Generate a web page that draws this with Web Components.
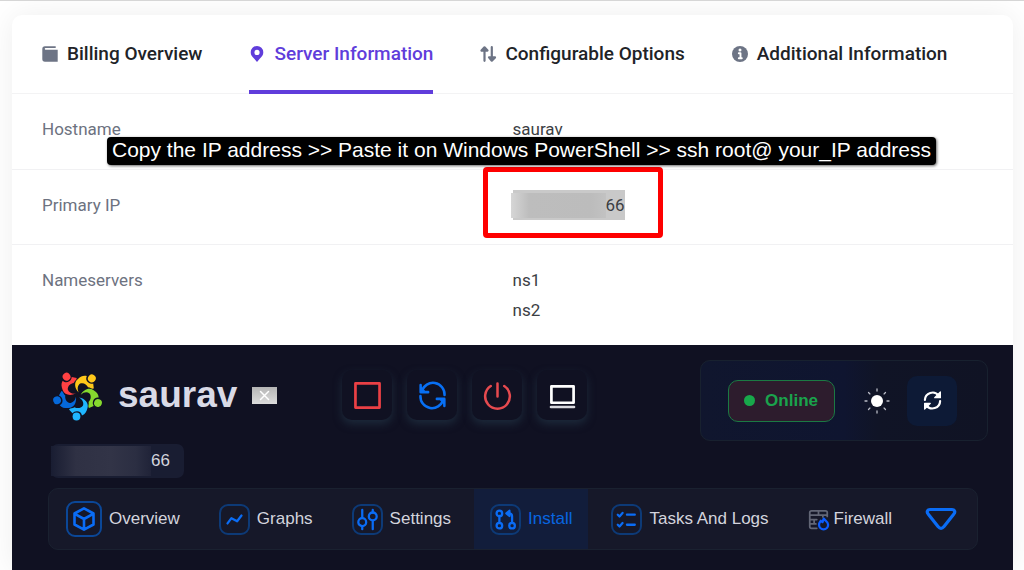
<!DOCTYPE html>
<html lang="en">
<head>
<meta charset="utf-8">
<title>Server Information</title>
<style>
  body { margin: 0; background: #fff; font-family: Roboto, "Liberation Sans", sans-serif; }
</style>
</head>
<body>
<server-page></server-page>
<script>
const define = (name, html) => customElements.define(name, class extends HTMLElement {
  constructor() {
    super();
    this.attachShadow({ mode: "open" });
  }
  connectedCallback() {
    if (this.shadowRoot.childNodes.length) return;
    const t = document.createElement("template");
    t.innerHTML = typeof html === "function" ? html(this) : html;
    this.shadowRoot.append(t.content.cloneNode(true));
  }
});

/* Icons: [viewBox, markup] */
const figure = (angle, fill) => `<g transform="rotate(${angle})" fill="${fill}"><circle cx="-1.500" cy="21.500" r="3.900"/><path d="M1 2.500C7 3.500 11 8 9.500 13C8.500 16.500 7.500 19 4 20.500C3.500 17.500 1.500 16.300-1 16.200C-3 16.200-4.500 17-5.500 18.300L-9 14.500C-7.500 12.500-5.500 13.700-3.500 12.200C-1 13.600 3 13.500 5 10.500C6 7.500 4.500 4.500 1 2.500Z"/></g>`;
const rays = [0, 45, 90, 135, 180, 225, 270, 315].map(a => `<path d="M0-12V-10" transform="rotate(${a})"/>`).join("");
const line = (art, width = 2.6) => `<g stroke="currentColor" stroke-width="${width}">${art}</g>`;
const ICONS = {
  wallet: ["0 0 16 16", `<path fill="currentColor" d="M3 .3h10.700V2H3.500c-1 0-1 1.700 0 1.700H15.700V15.700H3A2.700 2.700 0 0 1 .3 13V3A2.700 2.700 0 0 1 3 .3Z"/>`],
  pin: ["0 0 16 16", `<path fill="currentColor" fill-rule="evenodd" d="M8 0a6.300 6.300 0 0 1 6.300 6.300c0 2.800-1.300 4.300-3.800 6.700L8 16l-2.500-3C3 10.600 1.700 9.100 1.700 6.300A6.300 6.300 0 0 1 8 0Zm0 3.800a2.600 2.600 0 1 0 0 5.200 2.600 2.600 0 0 0 0-5.200Z"/>`],
  swap: ["0 0 16 16", `<g fill="currentColor" stroke="currentColor" stroke-width="2.200"><path d="M4.500 14.800V3M1.500 4.600h6L4.500 1.300Z"/><path d="M11.800 1.200V13M9 11.400h6L11.800 14.700Z"/></g>`],
  info: ["0 0 16 16", `<circle cx="8" cy="8" r="8" fill="currentColor"/><circle cx="8" cy="4" r="1.500" fill="#fff"/><path d="M6.800 7.200h1.700v4.800M6.800 12.200h3" stroke="#fff" stroke-width="1.900"/>`],
  logo: ["-25 -25 50 50", figure(0, "#1fb6ff") + figure(72, "#0568d9") + figure(144, "#ff4143") + figure(216, "#ffc81a") + figure(288, "#86d92e")],
  stop: ["0 0 28 28", `<path d="M1.500 1.500h25v25h-25Z" stroke="#ea4045" stroke-width="2.800"/>`],
  restart: ["0 0 28 28", `<g stroke="#0870f5" stroke-width="2.600"><path d="M3 9.500A12 12 0 0 1 26.500 13.500M1.700 3v7.500H9.500"/><path d="M25 18.500A12 12 0 0 1 1.500 14.500M26.300 25v-7.500H18.500"/><path fill="#0870f5" d="M2 5l4.500 5H2ZM26 23l-4.500-5H26Z" stroke-width="1"/></g>`],
  power: ["0 0 28 28", `<path d="M14 1.500V15M7 4.200a12.800 12.800 0 1 0 14 0" stroke="#e64a4f" stroke-width="2.600"/>`],
  console: ["0 0 28 28", `<path d="M2.500 4.500h23v17h-23Z" stroke="#fff" stroke-width="2.800"/><path d="M2 26h24" stroke="#d9d9df" stroke-width="2.600"/>`],
  sun: ["-13 -13 26 26", `<circle r="6" fill="#fff"/><g stroke="#b9bbc6" stroke-width="1.300">${rays}</g>`],
  sync: ["0 0 20 20", `<g stroke="#fff" stroke-width="2.300"><path d="M2 9.500A8 8 0 0 1 16.500 5"/><path d="M18 10.500A8 8 0 0 1 3.500 15"/><path fill="#fff" stroke-width="1.300" d="M18.300 1v6h-6ZM1.700 19v-6h6Z"/></g>`],
  cube: ["0 0 24 24", line(`<path d="M12 1.300 21.500 6.500v11L12 22.700 2.500 17.500v-11ZM2.800 6.800 12 12l9.200-5.200M12 12v10.500"/>`)],
  graph: ["0 0 24 24", line(`<path d="M4 16.500 8.500 10.500l6.500 3.500L20 7.500"/>`)],
  sliders: ["0 0 24 24", line(`<path d="M6 1v8M6 20v3M18 1v3M18 13.500V23"/><circle cx="6" cy="15" r="4.500"/><circle cx="18" cy="8.500" r="4.500"/>`)],
  branch: ["0 0 24 24", line(`<path d="M5 8v8M19.500 16V8a3 3 0 0 0-3-3h-3M16.500 2 13 5l3.500 3Z"/><circle cx="5" cy="5" r="3.200"/><circle cx="5" cy="19" r="3.200"/><circle cx="19.500" cy="19" r="3.200"/>`)],
  tasks: ["0 0 24 24", line(`<path d="M2 6.500 4 8.500 7.500 4.500M12.500 6.500h9M2 18l2 2 3.500-4M12.500 18h9"/>`)],
  firewall: ["0 0 24 24", `<path stroke="#626676" stroke-width="2" d="M10 22H4a2 2 0 0 1-2-2V4A2 2 0 0 1 4 2h16a2 2 0 0 1 2 2V8.500M2 7h20M2 12h8M2 17h7M12 2v5M17 7v2M7 12v5"/><path stroke="#0b5cff" stroke-width="2.600" d="M18 11c1 2 5 3 5 7a5.200 5.200 0 0 1-10.400 0c0-2 1-3 2-4.500l2 1.500Z"/>`],
  drop: ["0 0 32 24", line(`<path d="M5 2.500h22c3 0 3.500 3 1.700 4.700L19 19.500c-2 2.500-4 2.500-6 0L3.300 7.200C1.500 5.500 2 2.500 5 2.500Z"/>`, 3.2)],
  missing: ["0 0 25 17", `<defs><linearGradient id="g" x2="0" y2="1"><stop stop-color="#b5b5b5"/><stop offset="1" stop-color="#dcdcdc"/></linearGradient></defs><path fill="url(#g)" d="M0 0h25v17H0Z"/><path d="m8.500 4.500 8 8M16.500 4.500l-8 8" stroke="#fff" stroke-width="1.500"/>`]
};
define("ui-icon", el => {
  const [box, art] = ICONS[el.getAttribute("name")];
  return `<style>:host{display:block;flex:none}svg{display:block;width:100%;height:100%;overflow:visible}</style>
  <svg viewBox="${box}" aria-hidden="true" fill="none" stroke-linejoin="round" stroke-linecap="round">${art}</svg>`;
});

define("info-tab", el => `<style>
  :host { display: block; }
  a { position: relative; display: flex; align-items: center; gap: 9px; height: 79px; padding-bottom: 2px; box-sizing: border-box;
      color: #212327; text-decoration: none; font-size: 19px; font-weight: 500; line-height: 24px; white-space: nowrap; }
  ui-icon { width: 16px; height: 16px; color: #6d7485; }
  :host([active]) a, :host([active]) ui-icon { color: #603ddb; }
  :host([active]) a::after { content: ""; position: absolute; left: 0; right: 0; bottom: 0; height: 4px; background: #603ddb; }
</style><a href="#"><ui-icon name="${el.getAttribute("icon")}"></ui-icon><span><slot></slot></span></a>`);

define("info-tabs", `<style>
  :host { display: block; border-bottom: 1px solid #f3f3f4; }
  nav { display: flex; gap: 47px; padding: 0 30px; margin-bottom: -1px; }
</style><nav><slot></slot></nav>`);

define("info-row", `<style>
  :host { display: block; position: relative; border-bottom: 1px solid #f1f1f3; }
  :host(:last-of-type) { border-bottom: 0; }
  dl { display: grid; grid-template-columns: 1fr 1fr; margin: 0; padding: 20px 0 24px; font-size: 17px; line-height: 30px; }
  dt { padding-left: 30px; color: #6d7280; }
  dd { margin: 0; color: #3c3e43; }
  :host(:first-of-type) dl { padding-bottom: 25px; }
  :host(:last-of-type) dl { padding-bottom: 20px; }
</style><dl><dt><slot name="label"></slot></dt><dd><slot></slot></dd></dl>`);

define("masked-ip", `<style>
  :host { display: inline-flex; align-items: center; position: relative; vertical-align: top; height: 30px; background: #c9c9c9; }
  i { width: 95px; height: 25px; margin-left: -2px; background: linear-gradient(90deg, #d6d6d6, #bdbdbd 18px, #bcbcbc 80px, #c2c2c2); }
  .frame { position: absolute; inset: -23px -38px -18px -30px; border: 5px solid #fe0000; border-radius: 4px; }
</style><i></i><slot></slot><div class="frame"></div>`);

define("hint-banner", `<style>
  :host { position: absolute; z-index: 2; left: 95px; top: 122px; box-sizing: border-box; width: max-content; padding: 0 5px 2px;
    background: #000; color: #fff; border-radius: 4px; box-shadow: 1px 1px 3px rgba(0,0,0,.6);
    font: 21px/26px "Liberation Sans", Arial, sans-serif; white-space: nowrap; }
</style><slot></slot>`);

define("power-button", el => `<style>
  :host { display: block; }
  button { display: grid; place-items: center; width: 50px; height: 50px; padding: 0; border: 0; border-radius: 10px; background: #101122;
    box-shadow: 0 4px 8px #1d2a3b; }
  ui-icon { width: 27px; height: 27px; }
</style><button type="button" aria-label="${el.getAttribute("label")}"><ui-icon name="${el.getAttribute("icon")}"></ui-icon></button>`);

define("status-box", `<style>
  :host { display: flex; align-items: center; box-sizing: border-box; height: 81px; padding: 0 30px 0 27px; border: 1px solid #18212f;
    border-radius: 10px; background: linear-gradient(90deg, #10162e, #0f1530 50%, #101426 62%, #101324);
    font-family: "Liberation Sans", Arial, sans-serif; }
  .online { display: flex; align-items: center; gap: 10px; box-sizing: border-box; height: 42px; padding: 0 16px 0 15px;
    border: 1px solid #1b7a43; border-radius: 10px; background: #2d1c2d; color: #1aa34c; font-size: 17px; font-weight: 700; line-height: 24px; }
  .dot { width: 11px; height: 11px; border-radius: 50%; background: #18a84b; }
  button { display: grid; place-items: center; padding: 0; border: 0; background: none; }
  .theme { width: 26px; height: 26px; margin: 0 17px 0 29px; }
  .theme ui-icon { width: 26px; height: 26px; }
  .sync { width: 50px; height: 50px; border-radius: 10px; background: #0d1a36; }
  .sync ui-icon { width: 19px; height: 19px; }
</style>
<div class="online"><span class="dot"></span>Online</div>
<button class="theme" type="button" aria-label="Theme"><ui-icon name="sun"></ui-icon></button>
<button class="sync" type="button" aria-label="Refresh"><ui-icon name="sync"></ui-icon></button>`);

define("panel-link", el => `<style>
  :host { display: block; }
  a { display: flex; align-items: center; gap: 7px; height: 60px; padding: 0 16px; color: #d3d4dd; text-decoration: none;
    font-size: 17px; line-height: 24px; white-space: nowrap; }
  .frame { display: grid; place-items: center; box-sizing: border-box; width: 31px; height: 31px; border: 2px solid #0d3a77; border-radius: 9px; color: #0a6cf5; }
  ui-icon { width: 21px; height: 21px; }
  :host([active]) a { background: #121d3b; color: #0866e0; }
  :host([large]) .frame { width: 36px; height: 36px; border-color: #0b4797; }
  :host([large]) ui-icon { width: 24px; height: 24px; }
  :host([plain]) a { gap: 4px; }
  :host([plain]) .frame { width: 22px; height: 22px; border: 0; }
</style><a href="#"><span class="frame"><ui-icon name="${el.getAttribute("icon")}"></ui-icon></span><slot></slot></a>`);

define("panel-nav", `<style>
  :host { display: block; }
  nav { display: flex; align-items: center; gap: 7px; padding: 0 20px 0 1px; border: 1px solid #1a2130; border-radius: 10px; background: #161829; }
  button { width: 32px; height: 24px; margin-left: auto; padding: 0; border: 0; background: none; color: #0a6cf5; }
  ui-icon { width: 32px; height: 24px; }
</style><nav><slot></slot><button type="button" aria-label="More"><ui-icon name="drop"></ui-icon></button></nav>`);

define("server-panel", `<style>
  :host { display: block; padding: 15px 25px 20px 36px; background: #101122; font-family: "Liberation Sans", Arial, sans-serif; }
  header { display: flex; align-items: flex-start; }
  .name, .actions { display: flex; align-items: center; gap: 15px; height: 70px; }
  .name { padding-left: 5px; }
  .logo { width: 50px; height: 50px; }
  .missing { width: 25px; height: 17px; }
  h1 { margin: 0; color: #d9dae6; font-size: 37px; font-weight: 700; line-height: 40px; }
  .actions { padding-left: 65px; }
  status-box { margin-left: auto; }
  .chip { display: flex; align-items: center; box-sizing: border-box; width: max-content; height: 34px; margin: 3px 0 10px 3px; padding-right: 14px;
    border-radius: 7px; background: #191d32; color: #d3d4dd; font-size: 17px; line-height: 24px; }
  .chip i { width: 100px; height: 30px; background: linear-gradient(90deg, #191d32, #2f3144 25px, #323447 60px, #2b2e42 85px, #202338); }
  panel-nav { margin-right: 10px; }
</style>
<header>
  <div class="name"><ui-icon class="logo" name="logo"></ui-icon><h1>saurav</h1><ui-icon class="missing" name="missing"></ui-icon></div>
  <div class="actions">
    <power-button icon="stop" label="Stop"></power-button>
    <power-button icon="restart" label="Restart"></power-button>
    <power-button icon="power" label="Power"></power-button>
    <power-button icon="console" label="Console"></power-button>
  </div>
  <status-box></status-box>
</header>
<div class="chip"><i></i>66</div>
<panel-nav>
  <panel-link icon="cube" large>Overview</panel-link>
  <panel-link icon="graph">Graphs</panel-link>
  <panel-link icon="sliders">Settings</panel-link>
  <panel-link icon="branch" active>Install</panel-link>
  <panel-link icon="tasks">Tasks And Logs</panel-link>
  <panel-link icon="firewall" plain>Firewall</panel-link>
</panel-nav>`);

define("server-page", `<style>
  :host { display: block; box-sizing: border-box; min-height: 100vh; border-top: 1px solid #d6d6d6; padding: 14px 11px 0 12px; overflow: hidden; }
  main { position: relative; border-radius: 10px 10px 0 0; background: #fff; box-shadow: 0 0 30px rgba(0,0,0,.07); }
</style>
<main>
  <info-tabs>
    <info-tab icon="wallet">Billing Overview</info-tab>
    <info-tab icon="pin" active>Server Information</info-tab>
    <info-tab icon="swap">Configurable Options</info-tab>
    <info-tab icon="info">Additional Information</info-tab>
  </info-tabs>
  <info-row><span slot="label">Hostname</span>saurav</info-row>
  <info-row><span slot="label">Primary IP</span><masked-ip>66</masked-ip></info-row>
  <info-row><span slot="label">Nameservers</span>ns1<br>ns2</info-row>
  <hint-banner>Copy the IP address &gt;&gt; Paste it on Windows PowerShell &gt;&gt; ssh root@ your_IP address</hint-banner>
  <server-panel></server-panel>
</main>`);
</script>
</body>
</html>
